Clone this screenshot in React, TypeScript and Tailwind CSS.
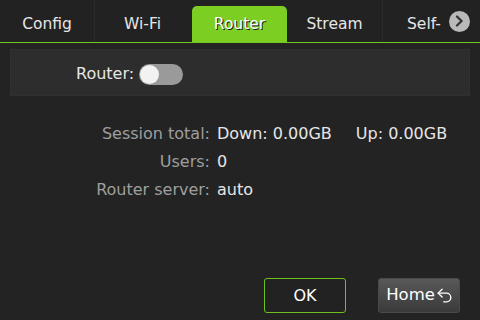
import { Undo2 } from 'lucide-react'

const tabs = ['Config', 'Wi-Fi', 'Router', 'Stream']

export default function App() {
  return (
    <div className="flex h-[320px] w-[480px] flex-col overflow-hidden bg-[#232323] font-['DejaVu_Sans',sans-serif] text-[#e6e6e6]">
      {/* tab bar */}
      <div className="flex h-[43px] shrink-0 items-end border-b border-[#74c91f] bg-[#222]">
        {tabs.map((t, i) =>
          t === 'Router' ? (
            <div
              key={t}
              className="ml-[2px] flex h-[36px] w-[95px] items-center justify-center rounded-t-[5px] bg-[#7ccf22] pt-[1px] text-[15.5px] text-white [text-shadow:1px_1px_0_#1a1a1a]"
            >
              {t}
            </div>
          ) : (
            <div
              key={t}
              className={`flex h-[42px] w-[95px] items-center justify-center pt-[7px] text-[15.5px] ${i === 0 ? 'border-r border-[#2b2b2b]' : ''}`}
            >
              {t}
            </div>
          )
        )}
        <div className="flex h-[42px] flex-1 items-center border-l border-[#2b2b2b] pl-[24px] text-[15.5px]">
          <span className="pt-[7px]">Self-</span>
          <span className="ml-[8px] flex h-[21px] w-[21px] items-center justify-center rounded-full bg-[#b9b9b9]">
            <svg width="10" height="12" viewBox="0 0 10 12">
              <path d="M3 1.5 7.5 6 3 10.5" fill="none" stroke="#333" strokeWidth="2.2" strokeLinecap="round" />
            </svg>
          </span>
        </div>
      </div>

      {/* router switch panel */}
      <div className="mx-[10px] mt-[6px] flex h-[47px] items-center border border-[#313131] bg-[#2d2d2d] pl-[65px] pt-[3px]">
        <span className="text-[16px] text-[#e6e6e6]">Router:</span>
        <span className="ml-[5px] flex h-[21px] w-[44px] items-center rounded-full bg-[#9a9a9a] px-[1px]">
          <span className="h-[19px] w-[19px] rounded-full bg-[#f2f2f2]" />
        </span>
      </div>

      {/* stats */}
      <div className="mt-[28px] grid grid-cols-[210px_1fr] gap-y-[8px] text-[16px] leading-[20px]">
        <span className="text-right text-[#9e9e9e]">Session total:</span>
        <span className="pl-[7px]">
          Down: 0.00GB<span className="ml-[24px]">Up: 0.00GB</span>
        </span>
        <span className="text-right text-[#9e9e9e]">Users:</span>
        <span className="pl-[7px]">0</span>
        <span className="text-right text-[#9e9e9e]">Router server:</span>
        <span className="pl-[7px]">auto</span>
      </div>

      {/* buttons */}
      <div className="mt-auto mb-[7px] flex justify-end gap-[32px] pr-[20px]">
        <button className="flex h-[35px] w-[82px] items-center justify-center rounded-[3px] border border-[#6fc21d] bg-[#222] text-[16px] text-white">
          OK
        </button>
        <button className="flex h-[35px] w-[82px] items-center justify-center rounded-[3px] border border-[#4a4a4a] bg-gradient-to-b from-[#595959] to-[#3a3a3a] pl-[2px] text-[16.5px] text-white">
          Home
          <Undo2 size={19} strokeWidth={1.7} />
        </button>
      </div>
    </div>
  )
}
